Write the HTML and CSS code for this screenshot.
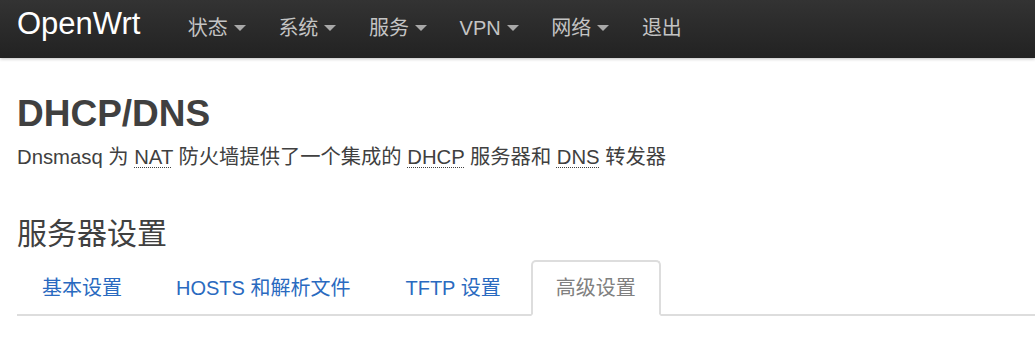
FILE: index.html
```html
<!DOCTYPE html>
<html lang="zh-CN">
<head>
<meta charset="utf-8">
<title>DHCP/DNS - OpenWrt</title>
<link rel="stylesheet" href="styles.css">
</head>
<body>
<header class="topbar">
  <a class="brand" href="#">OpenWrt</a>
  <ul class="nav">
    <li><a href="#">状态<span class="caret"></span></a></li>
    <li><a href="#">系统<span class="caret"></span></a></li>
    <li><a href="#">服务<span class="caret"></span></a></li>
    <li><a href="#">VPN<span class="caret"></span></a></li>
    <li><a href="#">网络<span class="caret"></span></a></li>
    <li><a href="#">退出</a></li>
  </ul>
</header>
<main class="content">
  <h2 class="page-title">DHCP/DNS</h2>
  <p class="page-desc">Dnsmasq 为 <abbr title="Network Address Translation">NAT</abbr> 防火墙提供了一个集成的 <abbr title="Dynamic Host Configuration Protocol">DHCP</abbr> 服务器和 <abbr title="Domain Name System">DNS</abbr> 转发器</p>
  <h3 class="section-title">服务器设置</h3>
  <ul class="tabs">
    <li><a href="#">基本设置</a></li>
    <li><a href="#">HOSTS 和解析文件</a></li>
    <li><a href="#">TFTP 设置</a></li>
    <li class="active"><a href="#">高级设置</a></li>
  </ul>
</main>
</body>
</html>
```

FILE: styles.css
```css
html, body {
  margin: 0;
  padding: 0;
  background: #fff;
}

body {
  font-family: "Liberation Sans", "Noto Sans CJK SC", Arial, sans-serif;
  color: #404040;
  overflow: hidden;
}

.topbar {
  display: flex;
  align-items: flex-start;
  height: 58px;
  padding-left: 17px;
  background: linear-gradient(to bottom, #333333, #222222);
  box-shadow: 0 1px 3px rgba(0, 0, 0, 0.25);
}

.brand {
  font-size: 31px;
  line-height: 48px;
  color: #ffffff;
  text-decoration: none;
  margin-right: 31px;
}

.nav {
  display: flex;
  list-style: none;
  margin: 0;
  padding: 0;
}

.nav a {
  display: flex;
  align-items: center;
  padding: 0 16.3px;
  font-size: 20px;
  line-height: 56px;
  height: 56px;
  color: #c4c4c4;
  text-decoration: none;
}

.caret {
  display: inline-block;
  width: 0;
  height: 0;
  margin-left: 6px;
  margin-top: -1px;
  border-left: 6px solid transparent;
  border-right: 6px solid transparent;
  border-top: 6px solid #a8a8a8;
}

.content {
  padding-left: 17px;
}

.page-title {
  margin: 36px 0 0;
  font-size: 37px;
  line-height: 40px;
  font-weight: bold;
  color: #404040;
}

.page-desc {
  margin: 9px 0 0;
  font-size: 20.3px;
  line-height: 28px;
  color: #404040;
}

abbr {
  text-decoration: underline dotted;
  text-decoration-thickness: 1px;
  text-underline-offset: 3px;
  cursor: help;
}

.section-title {
  margin: 45px 0 0;
  font-size: 30px;
  line-height: 36px;
  font-weight: normal;
  color: #404040;
}

.tabs {
  display: flex;
  list-style: none;
  margin: 8px 0 0;
  padding: 0;
  border-bottom: 2px solid #dddddd;
}

.tabs li {
  margin-right: 5px;
  margin-bottom: -2px;
}

.tabs a {
  display: block;
  padding: 0 23px;
  font-size: 20px;
  line-height: 52px;
  color: #2a6ac0;
  text-decoration: none;
  border: 2px solid transparent;
  border-radius: 5px 5px 0 0;
}

.tabs li:first-child a {
  padding-right: 22px;
}

.tabs .active a {
  color: #808080;
  background: #ffffff;
  border-color: #dddddd;
  border-bottom-color: #ffffff;
}
```
